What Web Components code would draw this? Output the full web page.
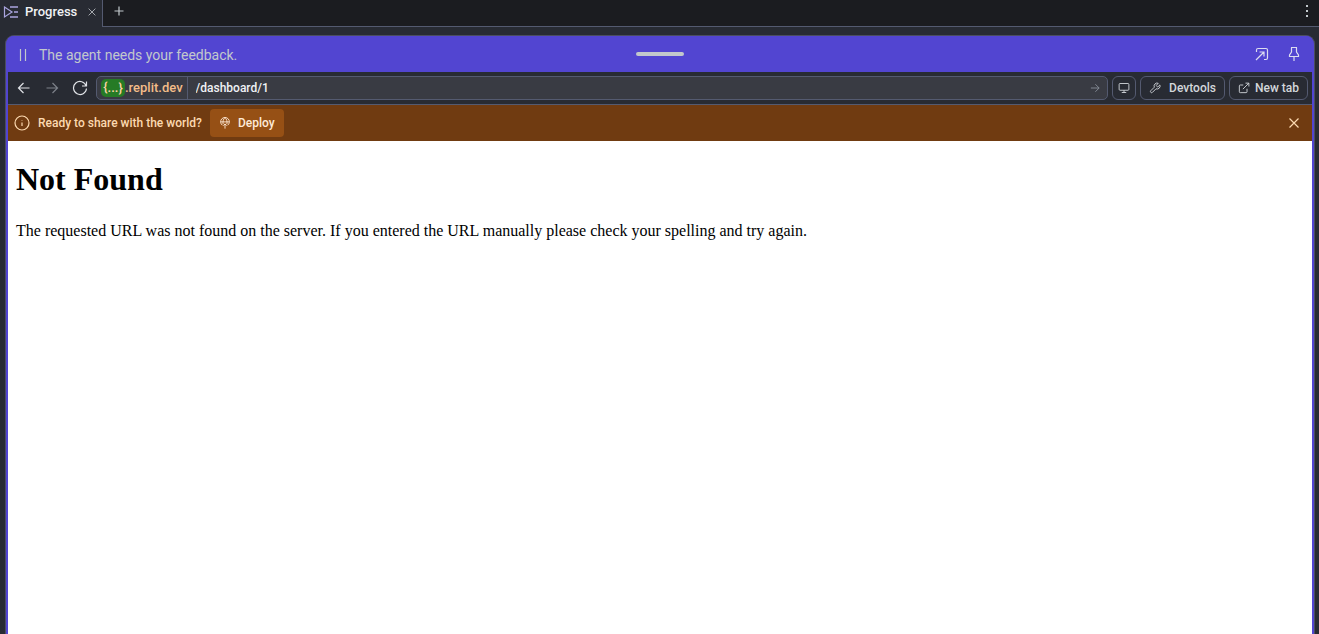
<!DOCTYPE html>
<html lang="en">
<head>
<meta charset="utf-8">
<title>Progress</title>
<style>
  html, body { margin: 0; height: 100%; }
  body {
    --surface: #282b33;
    --line: #545a70;
    --accent: #5245d1;
    background: var(--surface);
    font: 500 12px/20px Roboto, "Liberation Sans", sans-serif;
    color: #f0f2f5;
    overflow: hidden;
  }
</style>
</head>
<body>
<workspace-app></workspace-app>
<script>
const ICONS = {
  progress: '<path d="M1.500 3 9 8l-7.500 5z"/><path d="M7 3h8M11 8h4M7 13h8" stroke-width="1.500"/>',
  close: '<path d="m3.500 3.500 9 9m0-9-9 9"/>',
  plus: '<path d="M8 3.500v9M3.500 8h9"/>',
  more: '<g fill="currentColor" stroke="none"><rect x="7" y="2" width="2" height="2"/><rect x="7" y="7" width="2" height="2"/><rect x="7" y="12" width="2" height="2"/></g>',
  pause: '<path d="M5.500 2v12M10.500 2v12"/>',
  expand: '<path d="M2.500 6V4a1.500 1.500 0 0 1 1.500-1.500h8A1.500 1.500 0 0 1 13.500 4v8a1.500 1.500 0 0 1-1.500 1.500h-2M2 14l8-8M5.500 6H10v4.500"/>',
  pin: '<path d="M5 1.500h6M5.500 1.500v4.500L3.500 9v1.500h9V9l-2-3V1.500M8 10.500V15"/>',
  back: '<path d="M13.500 8h-11M7.500 3l-5 5 5 5"/>',
  forward: '<path d="M2.500 8h11M8.500 3l5 5-5 5"/>',
  reload: '<path d="M14.500 1.500v4.500H10M14.200 6A6.500 6.500 0 1 0 14.500 8.500"/>',
  monitor: '<rect x="1.500" y="2" width="13" height="9" rx="1.200"/><path d="M8 11v3M5 14h6"/>',
  wrench: '<path d="M10 4.200a.8.8 0 0 0 0 1.100l1 1a.8.8 0 0 0 1.100 0l2.400-2.400a4 4 0 0 1-5.200 5.200l-4.700 4.700a1.500 1.500 0 0 1-2.200-2.200l4.700-4.700a4 4 0 0 1 5.200-5.200z"/>',
  external: '<path d="M12 9v4a1.200 1.200 0 0 1-1.200 1.200H3A1.200 1.200 0 0 1 1.800 13V5.200A1.200 1.200 0 0 1 3 4h4M10 1.500h4.500V6M6.500 9.500l8-8"/>',
  info: '<circle cx="8" cy="8" r="7"/><path d="M8 7.500V11M8 5v.6"/>',
  deploy: '<path d="M4.500 11A5.800 5.800 0 1 1 11.500 11M2.200 6.500h11.600M5.500 9.500C4.800 6 5.800 2.500 8 1c2.200 1.500 3.200 5 2.500 8.500M8 9v6.500M5.800 11.500 8 9.300l2.200 2.200"/>'
};

function define(name, css, html) {
  customElements.define(name, class extends HTMLElement {
    constructor() {
      super();
      this.attachShadow({ mode: 'open' }).innerHTML =
        `<style>*{box-sizing:border-box}button{font:inherit;color:inherit;background:none;border:0;padding:0;margin:0;display:flex;align-items:center;justify-content:center}${css}</style>${html}`;
    }
  });
}

customElements.define('ui-icon', class extends HTMLElement {
  connectedCallback() {
    if (this.shadowRoot) return;
    const size = this.getAttribute('size') || 16;
    this.attachShadow({ mode: 'open' }).innerHTML =
      `<style>:host{display:inline-flex;flex:none}</style>
       <svg width="${size}" height="${size}" viewBox="0 0 16 16" fill="none" stroke="currentColor" stroke-width="1.200" aria-hidden="true">${ICONS[this.getAttribute('name')]}</svg>`;
  }
});

define('tab-bar', `
  :host { display: flex; height: 27px; flex: none; background: #1b1c20; }
  .tab { display: flex; align-items: center; padding: 0 4px 4px 3px; border-right: 1px solid var(--line); background: var(--surface); font-size: 13px; }
  .tab ui-icon { color: #aaa5df; }
  .tab span { margin: 0 9px 0 6px; }
  .rest { flex: 1; display: flex; align-items: center; justify-content: space-between; padding: 0 4px 4px 8px; border-bottom: 1px solid var(--line); color: #c2c8cc; }
  .tab .close ui-icon { color: #b1b5ba; }
`, `
  <div class="tab"><ui-icon name="progress"></ui-icon><span>Progress</span><button class="close" aria-label="Close tab"><ui-icon name="close" size="12"></ui-icon></button></div>
  <div class="rest"><button aria-label="Add tab"><ui-icon name="plus"></ui-icon></button><button aria-label="More options"><ui-icon name="more"></ui-icon></button></div>
`);

define('agent-header', `
  :host { display: grid; grid-template-columns: 1fr auto 1fr; align-items: center; height: 36px; padding: 0 7px; background: var(--accent); color: #c2c8cc; }
  .status { display: flex; align-items: center; gap: 8px; font-weight: 400; font-size: 14px; padding-top: 2px; }
  .grip { width: 48px; height: 4px; border-radius: 2px; background: #c2c8cc; }
  .actions { display: flex; justify-content: flex-end; gap: 16px; padding-right: 3px; color: #dcdcf0; }
`, `
  <div class="status"><ui-icon name="pause"></ui-icon><slot></slot></div>
  <div class="grip"></div>
  <div class="actions"><button aria-label="Open"><ui-icon name="expand"></ui-icon></button><button aria-label="Pin"><ui-icon name="pin"></ui-icon></button></div>
`);

define('tool-button', `
  :host { display: block; flex: none; }
  button { height: 24px; padding: 0 8px; gap: 5px; border: 1px solid var(--line); border-radius: 6px; color: #d3d7db; white-space: nowrap; }
  :host([square]) button { width: 24px; padding: 0; }
  :host([wide]) button { gap: 8px; }
`, `<button><slot></slot></button>`);

define('address-bar', `
  :host { display: flex; flex: 1; min-width: 0; height: 24px; border: 1px solid var(--line); border-radius: 5px; background: #393b43; align-items: center; overflow: hidden; }
  .domain { display: flex; align-items: center; height: 22px; padding: 0 4px; border-right: 1px solid var(--line); color: #f3bd89; font-size: 13px; }
  .mask { background: #267b25; color: #ffd3a8; border-radius: 5px; line-height: 18px; height: 18px; width: 24px; text-align: center; }
  input { flex: 1; min-width: 0; height: 22px; border: 0; padding: 0 8px; background: none; color: #f0f2f5; font: inherit; outline: 0; }
  .go { padding: 0 6px; color: #888e99; }
`, `
  <div class="domain"><span class="mask">{...}</span><span>.replit.dev</span></div>
  <input aria-label="Path" value="/dashboard/1">
  <button class="go" aria-label="Go"><ui-icon name="forward" size="12"></ui-icon></button>
`);

define('browser-toolbar', `
  :host { display: flex; align-items: center; gap: 4px; height: 33px; padding: 0 4px; border-bottom: 1px solid var(--line); background: var(--surface); }
  nav { display: flex; margin: 0 -2px; }
  nav button { width: 28px; height: 24px; color: #dfe2e6; }
  nav button:disabled { color: #7c8189; }
`, `
  <nav><button aria-label="Back"><ui-icon name="back"></ui-icon></button><button aria-label="Forward" disabled><ui-icon name="forward"></ui-icon></button><button aria-label="Reload"><ui-icon name="reload"></ui-icon></button></nav>
  <address-bar></address-bar>
  <tool-button square><ui-icon name="monitor" size="12"></ui-icon></tool-button>
  <tool-button wide><ui-icon name="wrench" size="12"></ui-icon>Devtools</tool-button>
  <tool-button><ui-icon name="external" size="12"></ui-icon>New tab</tool-button>
`);

define('deploy-banner', `
  :host { display: flex; align-items: center; height: 36px; padding: 0 10px 0 6px; background: #703b11; color: #fcd9b0; }
  .message { margin: 0 8px; }
  .deploy { height: 28px; padding: 0 9px; gap: 7px; border-radius: 4px; background: #965015; color: #ffead7; }
  .close { margin-left: auto; }
`, `
  <ui-icon name="info"></ui-icon><span class="message">Ready to share with the world?</span>
  <button class="deploy"><ui-icon name="deploy" size="12"></ui-icon>Deploy</button>
  <button class="close" aria-label="Dismiss"><ui-icon name="close"></ui-icon></button>
`);

define('web-view', `
  :host { display: block; flex: 1; padding: 0 8px; background: #fff; color: #000; font: 400 16px/18px "Liberation Serif", serif; }
  h1 { font-size: 32px; line-height: 36px; margin: 20px 0 25px; }
  p { margin: 0; }
`, `
  <h1>Not Found</h1>
  <p>The requested URL was not found on the server. If you entered the URL manually please check your spelling and try again.</p>
`);

define('workspace-app', `
  :host { display: flex; flex-direction: column; min-height: 100vh; }
  main { flex: 1; display: flex; flex-direction: column; margin: 8px 4px 0 5px; border: 1px solid #4b4e60; border-bottom: 0; border-radius: 9px 9px 0 0; overflow: hidden; background: var(--accent); padding: 0 2px; }
`, `
  <tab-bar></tab-bar>
  <main>
    <agent-header>The agent needs your feedback.</agent-header>
    <browser-toolbar></browser-toolbar>
    <deploy-banner></deploy-banner>
    <web-view></web-view>
  </main>
`);
</script>
</body>
</html>
